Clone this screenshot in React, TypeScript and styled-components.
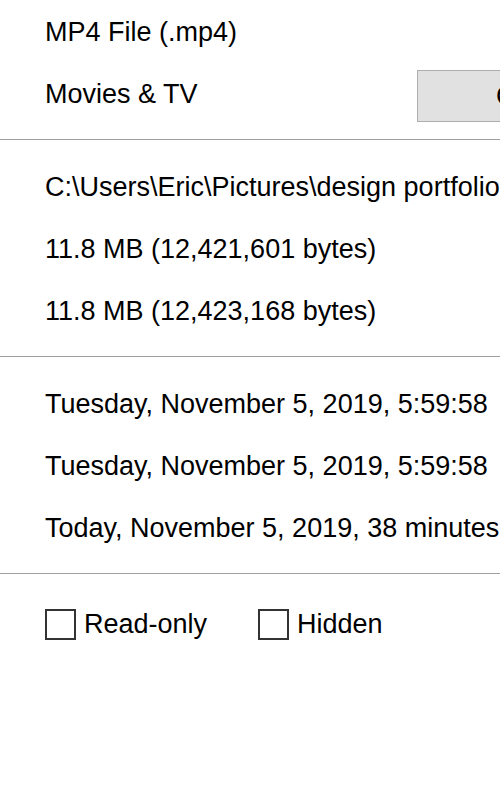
import React from "react";
import styled, { createGlobalStyle } from "styled-components";

const GlobalStyle = createGlobalStyle`
  html, body {
    margin: 0;
    padding: 0;
    background: #ffffff;
    overflow: hidden;
  }
  body {
    font-family: "Liberation Sans", Arial, sans-serif;
    color: #000000;
  }
`;

const Dialog = styled.div`
  width: 720px;
  height: 800px;
  background: #ffffff;
  padding-top: 1px;
  box-sizing: border-box;
`;

const Section = styled.div<{ $top?: number; $bottom?: number }>`
  display: flex;
  flex-direction: column;
  padding: ${(p) => p.$top ?? 16}px 0 ${(p) => p.$bottom ?? 14}px 45px;
`;

const Separator = styled.hr`
  margin: 0;
  border: none;
  height: 1px;
  background: #a0a0a0;
`;

const Row = styled.div`
  display: flex;
  align-items: center;
  height: 62px;
  font-size: 27px;
  white-space: nowrap;
`;

const Label = styled.span`
  flex: 1;
`;

const Button = styled.button`
  width: 275px;
  height: 52px;
  margin-top: 4px;
  margin-right: 28px;
  background: #e1e1e1;
  border: 1px solid #adadad;
  font-family: "Liberation Sans", Arial, sans-serif;
  font-size: 27px;
  color: #000000;
  padding: 0;
`;

const Attributes = styled.div`
  display: flex;
  align-items: center;
  gap: 51px;
  height: 62px;
  padding-top: 3px;
`;

const Check = styled.label`
  display: flex;
  align-items: center;
  gap: 8px;
  font-size: 27px;
`;

const Box = styled.span`
  width: 27px;
  height: 27px;
  border: 2px solid #333333;
  background: #ffffff;
`;

export default function App() {
  return (
    <>
      <GlobalStyle />
      <Dialog>
        <Section $top={0}>
          <Row>
            <Label>MP4 File (.mp4)</Label>
          </Row>
          <Row>
            <Label>Movies &amp; TV</Label>
            <Button>Change...</Button>
          </Row>
        </Section>
        <Separator />
        <Section>
          <Row>C:\Users\Eric\Pictures\design portfolio</Row>
          <Row>11.8 MB (12,421,601 bytes)</Row>
          <Row>11.8 MB (12,423,168 bytes)</Row>
        </Section>
        <Separator />
        <Section>
          <Row>Tuesday, November 5, 2019, 5:59:58</Row>
          <Row>Tuesday, November 5, 2019, 5:59:58</Row>
          <Row>Today, November 5, 2019, 38 minutes ago</Row>
        </Section>
        <Separator />
        <Section $top={16}>
          <Attributes>
            <Check>
              <Box />
              Read-only
            </Check>
            <Check>
              <Box />
              Hidden
            </Check>
          </Attributes>
        </Section>
      </Dialog>
    </>
  );
}
